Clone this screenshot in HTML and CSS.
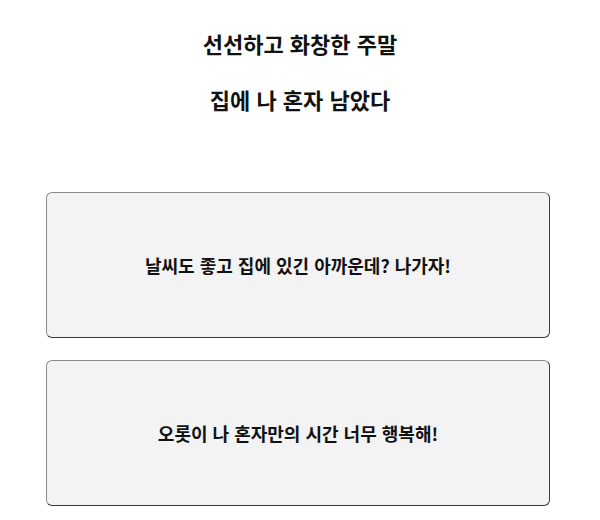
FILE: index.html
```html
<!DOCTYPE html>
<html lang="ko">
<head>
    <meta charset="UTF-8">
    <meta name="viewport" content="width=device-width, initial-scale=1.0">
    <title>주말</title>
    <link rel="stylesheet" href="styles.css">
</head>
<body>
    <div class="story">
        <p class="story-line">선선하고 화창한 주말</p>
        <p class="story-line">집에 나 혼자 남았다</p>
    </div>

    <div class="choices">
        <button class="choice-btn">날씨도 좋고 집에 있긴 아까운데? 나가자!</button>
        <button class="choice-btn">오롯이 나 혼자만의 시간 너무 행복해!</button>
    </div>
</body>
</html>
```

FILE: styles.css
```css
body {
    margin: 0;
    font-family: "Noto Sans CJK KR", "Noto Sans", sans-serif;
    color: #111;
    background: #fff;
    display: flex;
    flex-direction: column;
    align-items: center;
}

.story {
    display: flex;
    flex-direction: column;
    align-items: center;
    gap: 30px;
    padding-top: 30px;
}

.story-line {
    margin: 0;
    font-size: 22px;
    line-height: 26px;
    font-weight: bold;
}

.choices {
    align-self: flex-start;
    display: flex;
    flex-direction: column;
    gap: 22px;
    margin-top: 80px;
    margin-left: 46px;
}

.choice-btn {
    width: 504px;
    height: 146px;
    font-family: inherit;
    font-size: 18px;
    font-weight: bold;
    color: #111;
    background-color: #f3f3f3;
    border: 1px solid;
    border-color: #8c8c8c #3c3c3c #3c3c3c #8c8c8c;
    border-radius: 6px;
    cursor: pointer;
}
```
